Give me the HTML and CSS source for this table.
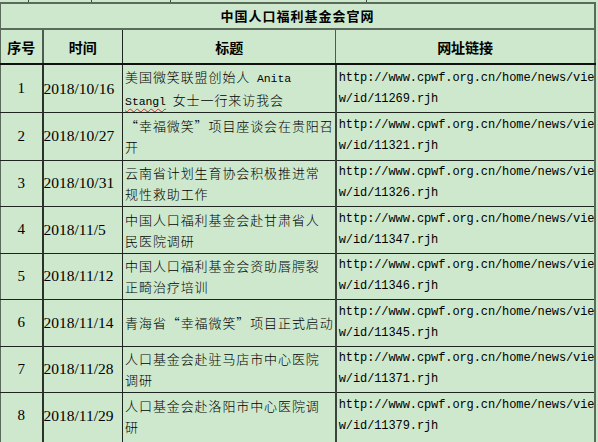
FILE: index.html
```html
<!DOCTYPE html>
<html lang="zh-CN">
<head>
<meta charset="utf-8">
<title>中国人口福利基金会官网</title>
<link rel="stylesheet" href="styles.css">
</head>
<body>
<div class="prev">
  <div class="pc w1"></div>
  <div class="pc w2"></div>
  <div class="pc w3"></div>
  <div class="pc w4"></div>
  <div class="pc w5"></div>
</div>
<table class="sheet">
  <colgroup>
    <col class="c-no">
    <col class="c-date">
    <col class="c-title">
    <col class="c-url">
  </colgroup>
  <tr class="r-cap">
    <th colspan="4" class="cap">中国人口福利基金会官网</th>
  </tr>
  <tr class="r-head">
    <th class="h">序号</th>
    <th class="h">时间</th>
    <th class="h">标题</th>
    <th class="h">网址链接</th>
  </tr>
  <tr class="r-d r1">
    <td class="no">1</td>
    <td class="date">2018/10/16</td>
    <td class="ttl">美国微笑联盟创始人<span class="lat"> Anita</span><br><span class="lat spell">Stangl</span><span class="lat"> </span>女士一行来访我会</td>
    <td class="url">http://www.cpwf.org.cn/home/news/vie<br>w/id/11269.rjh</td>
  </tr>
  <tr class="r-d r2">
    <td class="no">2</td>
    <td class="date">2018/10/27</td>
    <td class="ttl">“幸福微笑”项目座谈会在贵阳召<br>开</td>
    <td class="url">http://www.cpwf.org.cn/home/news/vie<br>w/id/11321.rjh</td>
  </tr>
  <tr class="r-d">
    <td class="no">3</td>
    <td class="date">2018/10/31</td>
    <td class="ttl">云南省计划生育协会积极推进常<br>规性救助工作</td>
    <td class="url">http://www.cpwf.org.cn/home/news/vie<br>w/id/11326.rjh</td>
  </tr>
  <tr class="r-d">
    <td class="no">4</td>
    <td class="date">2018/11/5</td>
    <td class="ttl">中国人口福利基金会赴甘肃省人<br>民医院调研</td>
    <td class="url">http://www.cpwf.org.cn/home/news/vie<br>w/id/11347.rjh</td>
  </tr>
  <tr class="r-d">
    <td class="no">5</td>
    <td class="date">2018/11/12</td>
    <td class="ttl">中国人口福利基金会资助唇腭裂<br>正畸治疗培训</td>
    <td class="url">http://www.cpwf.org.cn/home/news/vie<br>w/id/11346.rjh</td>
  </tr>
  <tr class="r-d">
    <td class="no">6</td>
    <td class="date">2018/11/14</td>
    <td class="ttl">青海省“幸福微笑”项目正式启动</td>
    <td class="url">http://www.cpwf.org.cn/home/news/vie<br>w/id/11345.rjh</td>
  </tr>
  <tr class="r-d">
    <td class="no">7</td>
    <td class="date">2018/11/28</td>
    <td class="ttl">人口基金会赴驻马店市中心医院<br>调研</td>
    <td class="url">http://www.cpwf.org.cn/home/news/vie<br>w/id/11371.rjh</td>
  </tr>
  <tr class="r-d r8">
    <td class="no">8</td>
    <td class="date">2018/11/29</td>
    <td class="ttl">人口基金会赴洛阳市中心医院调<br>研</td>
    <td class="url">http://www.cpwf.org.cn/home/news/vie<br>w/id/11379.rjh</td>
  </tr>
</table>
</body>
</html>
```
FILE: styles.css
```css
html, body {
  margin: 0;
  padding: 0;
  background: #cde8cd;
  overflow: hidden;
}

body {
  width: 598px;
  height: 442px;
  color: #000;
  font-family: "Noto Sans CJK SC", sans-serif;
}

.prev {
  display: flex;
  height: 2px;
}

.pc {
  flex: none;
  height: 2px;
  border-right: 1px solid #3f4f3f;
  box-sizing: border-box;
}
.w1 { width: 29px; }
.w2 { width: 63px; }
.w3 { width: 79px; }
.w4 { width: 196px; }
.w5 { width: 200px; border-right: 0; }

.sheet {
  border-collapse: collapse;
  table-layout: fixed;
  width: 596px;
  border-right: 2px solid #5b6b5b;
}

.c-no { width: 42px; }
.c-date { width: 80px; }
.c-title { width: 213px; }
.c-url { width: 259px; }

th, td {
  padding: 0;
  border: 1px solid #1e241e;
  vertical-align: middle;
  overflow: hidden;
  white-space: nowrap;
}

.cap {
  height: 24px;
  border-top: 2px solid #5b6b5b;
  border-bottom: 2px solid #5b6b5b;
  border-left: 1px solid #5b6b5b;
  font-size: 13px;
  font-weight: 700;
  letter-spacing: 1px;
  text-align: center;
  line-height: 20px;
}

.h {
  height: 33px;
  font-size: 14px;
  font-weight: 700;
  text-align: center;
  line-height: 20px;
  border-bottom: 2px solid #111;
}
.h:first-child { border-left: 1px solid #5b6b5b; border-right: 2px solid #4d5d4d; }
.h:nth-child(3) { border-right: 1px solid #4d5d4d; }

.r-d td { height: 45.5px; }
.r1 td { height: 47px; }
.r2 td { height: 46.5px; }
.r8 td { height: 45.5px; border-bottom: 0; padding-bottom: 10px; }

.no {
  font-family: "Liberation Serif", serif;
  font-size: 15px;
  text-align: center;
  border-left: 1px solid #5b6b5b;
  border-right: 2px solid #2a322a;
}

.date {
  font-family: "Liberation Serif", serif;
  font-size: 15.5px;
  padding-left: 0;
  text-align: left;
}

.ttl {
  font-size: 13px;
  font-weight: 300;
  letter-spacing: 0.9px;
  line-height: 21px;
  padding-left: 2px;
  text-align: left;
}

.lat {
  font-family: "Liberation Mono", monospace;
  font-size: 11.5px;
  font-weight: 400;
  letter-spacing: -0.1px;
}

.spell {
  text-decoration: underline wavy #e02020;
  text-decoration-thickness: 1px;
  text-underline-offset: 3px;
}

.url {
  font-family: "Liberation Mono", monospace;
  font-size: 12px;
  letter-spacing: -0.1px;
  line-height: 21px;
  padding-left: 2px;
  text-align: left;
  border-left: 2px solid #3a443a;
}
```
